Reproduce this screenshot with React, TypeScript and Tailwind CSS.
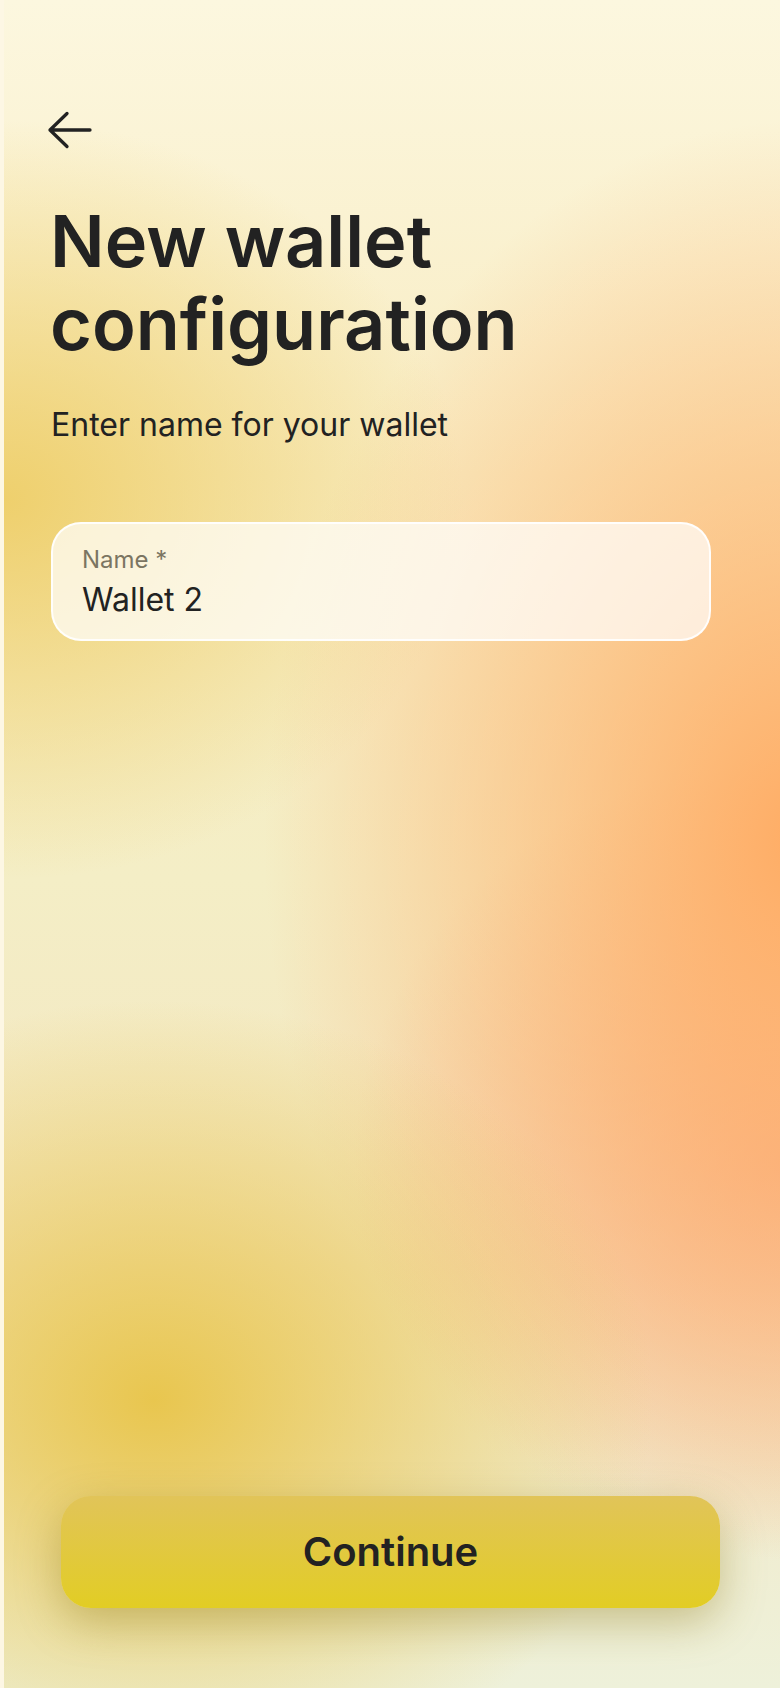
import React from "react";

function BackArrow() {
  return (
    <svg
      width="48"
      height="40"
      viewBox="0 0 48 40"
      fill="none"
      stroke="#222222"
      strokeWidth="3.3"
      strokeLinecap="round"
      strokeLinejoin="round"
    >
      <path d="M4 20H44M21 3.5L4 20L21 36.5" />
    </svg>
  );
}

export default function App() {
  return (
    <div className="min-h-screen w-full flex border-l-4 border-[#fdf7e4] font-[Inter,sans-serif] text-[#222222] bg-[radial-gradient(ellipse_500px_400px_at_150px_1400px,rgba(232,196,72,0.95)_0%,rgba(232,196,72,0)_100%),radial-gradient(ellipse_540px_720px_at_800px_840px,rgba(255,172,100,1)_0%,rgba(255,172,100,0)_100%),radial-gradient(ellipse_440px_400px_at_790px_1160px,rgba(250,176,136,0.85)_0%,rgba(250,176,136,0)_100%),radial-gradient(ellipse_460px_380px_at_0px_500px,rgba(238,206,104,0.95)_0%,rgba(238,206,104,0)_100%),linear-gradient(to_bottom,#fcf7df_0%,#f8ecc2_28%,#f4eec6_52%,#f3e6c2_75%,#eef1da_100%)]">
      <div className="flex flex-1 flex-col pt-[110px] pb-[80px]">
        <button className="ml-[42px] w-[48px] h-[40px]">
          <BackArrow />
        </button>

        <h1 className="mt-[49px] ml-[46px] text-[72px] leading-[83px] font-semibold">
          New wallet
          <br />
          configuration
        </h1>

        <p className="mt-[40px] ml-[47px] text-[32px] leading-[40px]">
          Enter name for your wallet
        </p>

        <div className="mt-[77px] ml-[47px] w-[660px] rounded-[30px] border-2 border-white/90 bg-white/70 pl-[29px] pt-[21px] pb-[20px]">
          <div className="text-[24px] leading-[29px] text-[#7b7562]">
            Name *
          </div>
          <div className="mt-[7px] text-[32px] leading-[38px]">Wallet 2</div>
        </div>

        <div className="flex-1" />

        <button className="ml-[57px] w-[659px] h-[112px] rounded-[30px] flex items-center justify-center bg-[linear-gradient(to_bottom,#e1c459,#e2cd24)] shadow-[0_14px_44px_rgba(140,120,20,0.4)] text-[40px] font-semibold">
          Continue
        </button>
      </div>
    </div>
  );
}
